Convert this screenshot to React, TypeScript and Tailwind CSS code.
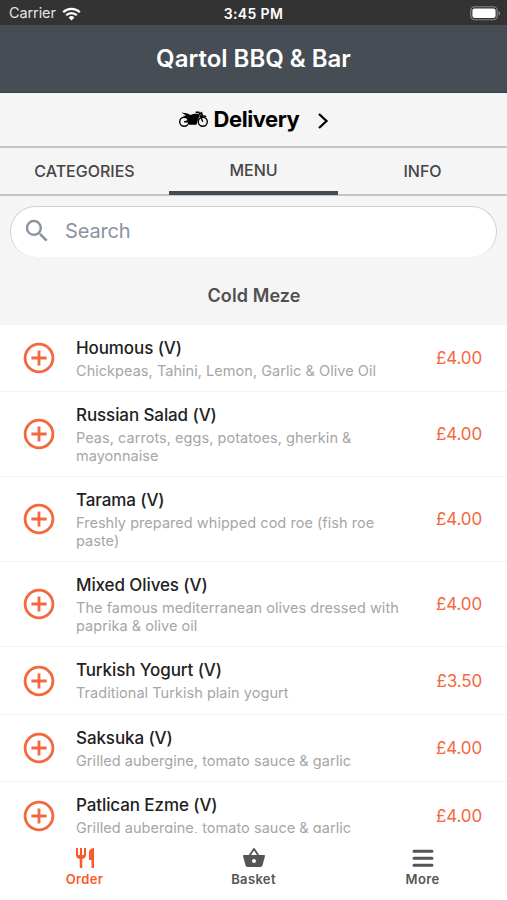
import { MdRestaurant, MdSearch, MdShoppingBasket } from 'react-icons/md';

type Item = { name: string; lines: string[]; price: string; height: string };

const items: Item[] = [
  { name: 'Houmous (V)', lines: ['Chickpeas, Tahini, Lemon, Garlic & Olive Oil'], price: '£4.00', height: 'h-[67px]' },
  { name: 'Russian Salad (V)', lines: ['Peas, carrots, eggs, potatoes, gherkin &', 'mayonnaise'], price: '£4.00', height: 'h-[85px]' },
  { name: 'Tarama (V)', lines: ['Freshly prepared whipped cod roe (fish roe', 'paste)'], price: '£4.00', height: 'h-[85px]' },
  { name: 'Mixed Olives (V)', lines: ['The famous mediterranean olives dressed with', 'paprika & olive oil'], price: '£4.00', height: 'h-[85px]' },
  { name: 'Turkish Yogurt (V)', lines: ['Traditional Turkish plain yogurt'], price: '£3.50', height: 'h-[68px]' },
  { name: 'Saksuka (V)', lines: ['Grilled aubergine, tomato sauce & garlic'], price: '£4.00', height: 'h-[67px]' },
  { name: 'Patlican Ezme (V)', lines: ['Grilled aubergine, tomato sauce & garlic'], price: '£4.00', height: 'h-[68px]' },
];

function WifiIcon() {
  return (
    <svg width="19" height="14" viewBox="0 0 19 14" fill="none" stroke="#fff" strokeWidth="2.3">
      <path d="M1.2 5.2a11.8 11.8 0 0 1 16.6 0" />
      <path d="M4.2 8.3a7.5 7.5 0 0 1 10.6 0" />
      <path d="M9.5 13.4 6.6 10.5a4.1 4.1 0 0 1 5.8 0Z" fill="#fff" stroke="none" />
    </svg>
  );
}

function BatteryIcon() {
  return (
    <svg width="31" height="15" viewBox="0 0 31 15">
      <rect x="0.75" y="0.75" width="26.5" height="13" rx="4" fill="none" stroke="#858585" strokeWidth="1.2" />
      <rect x="2.4" y="2.4" width="23.2" height="9.7" rx="2.4" fill="#fff" />
      <path d="M28.6 5v4.6c1-.4 1.6-1.3 1.6-2.3S29.6 5.4 28.6 5Z" fill="#858585" />
    </svg>
  );
}

function MotorcycleIcon() {
  return (
    <svg width="30" height="17" viewBox="0 0 30 17" fill="none" stroke="#000" strokeWidth="1.4">
      <circle cx="5.2" cy="10.8" r="4.5" />
      <circle cx="23.8" cy="10.8" r="4.5" />
      <path d="M2.2 1.6 8.5 2.6 11.5 4 15.2 2.8 19.3 2.8 20.6 5.2 18.8 9 17.5 13.8H10.2L9 11.6H5V10.2L8.5 9.2 7.5 6.8 4 5 7.2 4.6Z" fill="#000" stroke="none" />
      <path d="M16.6 1.2h3.2L23.8 10.800M20.300 3l2.200-1.400.8 2.400-2.300.4M21.600 6.600c1.400-1.500 3.700-1.900 5.600-.9" />
    </svg>
  );
}

function PlusCircle() {
  return (
    <svg width="32" height="32" viewBox="0 0 32 32" fill="none" stroke="#f5683d" strokeWidth="2.8">
      <circle cx="16" cy="16" r="13.9" />
      <path d="M16 8.4v15.2M8.4 16h15.2" />
    </svg>
  );
}

function MenuRow({ item }: { item: Item }) {
  return (
    <div className={`flex shrink-0 border-b border-[#f3f3f3] ${item.height}`}>
      <div className="flex w-[76px] shrink-0 items-center pl-[23px]">
        <PlusCircle />
      </div>
      <div className="grow whitespace-nowrap pt-[11px]">
        <div className="text-[17px] font-medium leading-[24px] tracking-[-0.1px] text-[#222]">{item.name}</div>
        <div className="pt-[2px] text-[14.5px] leading-[17.5px] tracking-[0.04px] text-[#a6a6a6]">
          {item.lines.map((line) => (
            <div key={line}>{line}</div>
          ))}
        </div>
      </div>
      <div className="flex w-[80px] shrink-0 items-center justify-end pr-[25px] pt-[2px] text-[17px] tracking-[-0.15px] text-[#f5683d]">{item.price}</div>
    </div>
  );
}

export default function App() {
  return (
    <div className="flex h-[900px] w-[507px] flex-col overflow-hidden bg-white font-['Inter',sans-serif]">
      <div className="grid h-[25px] shrink-0 grid-cols-3 items-center bg-[#333] pt-[2px] text-white">
        <div className="flex items-center gap-[6px] pl-[9px] text-[14.5px] leading-none tracking-[-0.1px] text-[#e4e4e4]">
          <span>Carrier</span>
          <WifiIcon />
        </div>
        <div className="text-center text-[14px] font-semibold leading-none tracking-[0.35px]">3:45 PM</div>
        <div className="flex justify-end pr-[6px]"><BatteryIcon /></div>
      </div>
      <div className="flex h-[68px] shrink-0 items-center justify-center border-b border-[#39424a] bg-[#464d55] text-[24px] font-semibold text-white">
        Qartol BBQ &amp; Bar
      </div>
      <div className="flex h-[53px] shrink-0 items-center justify-center bg-[#f5f5f5] pl-px text-black">
        <MotorcycleIcon />
        <span className="mb-[2px] ml-[5px] text-[22px] font-bold leading-none tracking-[-0.45px]">Delivery</span>
        <svg className="ml-[18px] mt-[2px]" width="12" height="18" viewBox="0 0 12 18" fill="none" stroke="#000" strokeWidth="2.3">
          <path d="m2 2 7.5 7L2 16" />
        </svg>
      </div>
      <div className="grid h-[50px] shrink-0 grid-cols-3 border-y-2 border-[#c3c5c5] bg-[#f5f5f5] text-[16px] font-medium text-[#454545]">
        <div className="flex items-center justify-center">CATEGORIES</div>
        <div className="-mb-px flex items-center justify-center border-b-4 border-[#424b54]">MENU</div>
        <div className="flex items-center justify-center">INFO</div>
      </div>
      <div className="flex h-[129px] shrink-0 flex-col bg-[#f5f5f5] px-[10px] pt-[10px]">
        <div className="flex h-[51px] items-center rounded-full border border-b-0 border-[#d0d0d0] bg-white pb-[2px] pl-[11px] text-[#8a93a0]">
          <MdSearch size={30} />
          <span className="ml-[13px] text-[20px] tracking-[-0.15px]">Search</span>
        </div>
        <div className="flex grow items-center justify-center pl-px pt-[8px] text-[18px] font-semibold tracking-[0.1px] text-[#505050]">Cold Meze</div>
      </div>
      <div className="flex h-[508px] shrink-0 flex-col overflow-hidden">
        {items.map((item) => (
          <MenuRow key={item.name} item={item} />
        ))}
      </div>
      <div className="grid h-[67px] grid-cols-3 bg-white pt-[13px] text-[13px] font-semibold leading-[16px] tracking-[0.35px] text-[#555]">
        <div className="flex flex-col items-center gap-px text-[#fa5a2a]">
          <MdRestaurant size={24} />
          Order
        </div>
        <div className="flex flex-col items-center gap-px">
          <MdShoppingBasket size={24} />
          Basket
        </div>
        <div className="flex flex-col items-center gap-px">
          <svg width="24" height="24" viewBox="0 0 24 24" fill="none" stroke="#555" strokeWidth="3" strokeLinecap="round">
            <path d="M3 5.3h18M3 12.3h18M3 19.3h18" />
          </svg>
          More
        </div>
      </div>
    </div>
  );
}
